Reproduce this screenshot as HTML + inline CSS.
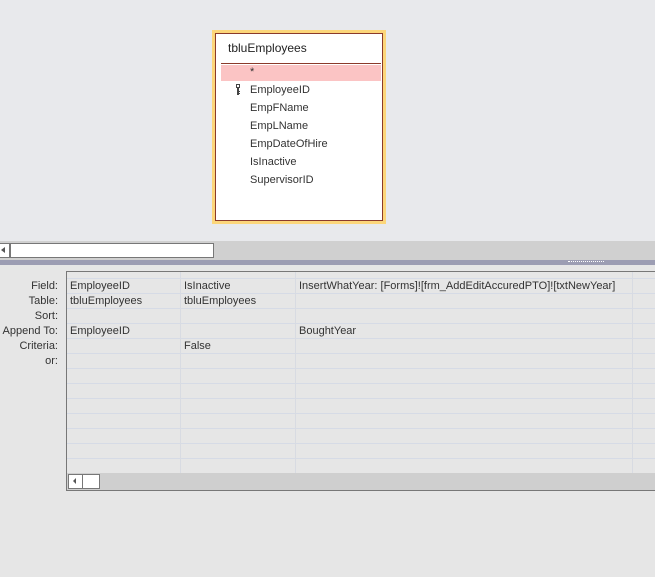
<!DOCTYPE html>
<html><head><style>
*{margin:0;padding:0;box-sizing:border-box}
body{width:655px;height:577px;background:#e6e6e6;position:relative;overflow:hidden;font-family:"Segoe UI","Liberation Sans",sans-serif;font-size:11px;color:#333}
.a{position:absolute}
.top{left:0;top:0;width:655px;height:241px;background:#e8e9ec}
.tbl{left:212px;top:30px;width:174px;height:194px;border:3px solid #fcd67a;background:#fff}
.tbl .in{position:absolute;left:0;top:0;right:0;bottom:0;border:1px solid #8b3a2a}
.f{position:absolute;left:34px;font-size:11px;color:#333}
.lab{position:absolute;right:597px;text-align:right;white-space:nowrap}
.c{position:absolute;white-space:nowrap}
.hl{position:absolute;left:67px;width:588px;height:1px;background:#d6dbe6}
.vl{position:absolute;top:272px;height:201px;width:1px;background:#d8dbe2}
</style></head><body>
<div class="a top"></div>
<div class="a tbl"><div class="in">
<div style="position:absolute;left:12px;top:7px;font-size:12px;color:#222">tbluEmployees</div>
<div style="position:absolute;left:5px;top:29px;width:160px;height:1px;background:#8b3a2a"></div>
<div style="position:absolute;left:5px;top:31px;width:160px;height:16px;background:#fbc4c4"></div>
<div class="f" style="top:32px">*</div>
<svg style="position:absolute;left:19px;top:50px" width="6" height="11" viewBox="0 0 6 11"><rect x="1" y="0" width="4" height="4" fill="#444"/><rect x="2" y="1" width="2" height="2" fill="#fff"/><rect x="2" y="4" width="2" height="7" fill="#444"/><rect x="4" y="7" width="1" height="1" fill="#444"/><rect x="4" y="9" width="1" height="1" fill="#444"/></svg>
<div class="f" style="top:50px">EmployeeID</div>
<div class="f" style="top:68px">EmpFName</div>
<div class="f" style="top:86px">EmpLName</div>
<div class="f" style="top:104px">EmpDateOfHire</div>
<div class="f" style="top:122px">IsInactive</div>
<div class="f" style="top:140px">SupervisorID</div>
</div></div>
<div class="a" style="left:0;top:241px;width:655px;height:19px;background:#d0d0d0"></div>
<div class="a" style="left:0;top:243px;width:10px;height:15px;background:#fff;border:1px solid #777;border-left:none"></div>
<div class="a" style="left:1px;top:247px;width:0;height:0;border:3px solid transparent;border-right:4px solid #555;border-left:none"></div>
<div class="a" style="left:10px;top:243px;width:204px;height:15px;background:#fff;border:1px solid #777"></div>
<div class="a" style="left:0;top:260px;width:655px;height:5px;background:#9c9db3"></div>
<div class="a" style="left:568px;top:261px;width:36px;height:2px;border-top:1px dotted #fff"></div>
<div class="a" style="left:66px;top:271px;width:589px;height:220px;border:1px solid #777;border-right:none;background:#e6e6e6"></div>
<div class="hl" style="top:278px"></div>
<div class="hl" style="top:293px"></div><div class="hl" style="top:308px"></div><div class="hl" style="top:323px"></div><div class="hl" style="top:338px"></div><div class="hl" style="top:353px"></div><div class="hl" style="top:368px"></div><div class="hl" style="top:383px"></div><div class="hl" style="top:398px"></div><div class="hl" style="top:413px"></div><div class="hl" style="top:428px"></div><div class="hl" style="top:443px"></div><div class="hl" style="top:458px"></div>
<div class="vl" style="left:180px"></div><div class="vl" style="left:295px"></div><div class="vl" style="left:632px"></div>
<div class="lab" style="top:280px">Field:</div>
<div class="lab" style="top:295px">Table:</div>
<div class="lab" style="top:310px">Sort:</div>
<div class="lab" style="top:325px">Append To:</div>
<div class="lab" style="top:340px">Criteria:</div>
<div class="lab" style="top:355px">or:</div>
<div class="c" style="left:70px;top:280px">EmployeeID</div>
<div class="c" style="left:184px;top:280px">IsInactive</div>
<div class="c" style="left:299px;top:280px">InsertWhatYear: [Forms]![frm_AddEditAccuredPTO]![txtNewYear]</div>
<div class="c" style="left:70px;top:295px">tbluEmployees</div>
<div class="c" style="left:184px;top:295px">tbluEmployees</div>
<div class="c" style="left:70px;top:325px">EmployeeID</div>
<div class="c" style="left:299px;top:325px">BoughtYear</div>
<div class="c" style="left:184px;top:340px">False</div>
<div class="a" style="left:67px;top:473px;width:588px;height:17px;background:#cfcfcf"></div>
<div class="a" style="left:68px;top:474px;width:32px;height:15px;background:#fff;border:1px solid #777"></div>
<div class="a" style="left:82px;top:474px;width:1px;height:15px;background:#777"></div>
<div class="a" style="left:73px;top:478px;width:0;height:0;border:3px solid transparent;border-right:3px solid #555;border-left:none"></div>
</body></html>
